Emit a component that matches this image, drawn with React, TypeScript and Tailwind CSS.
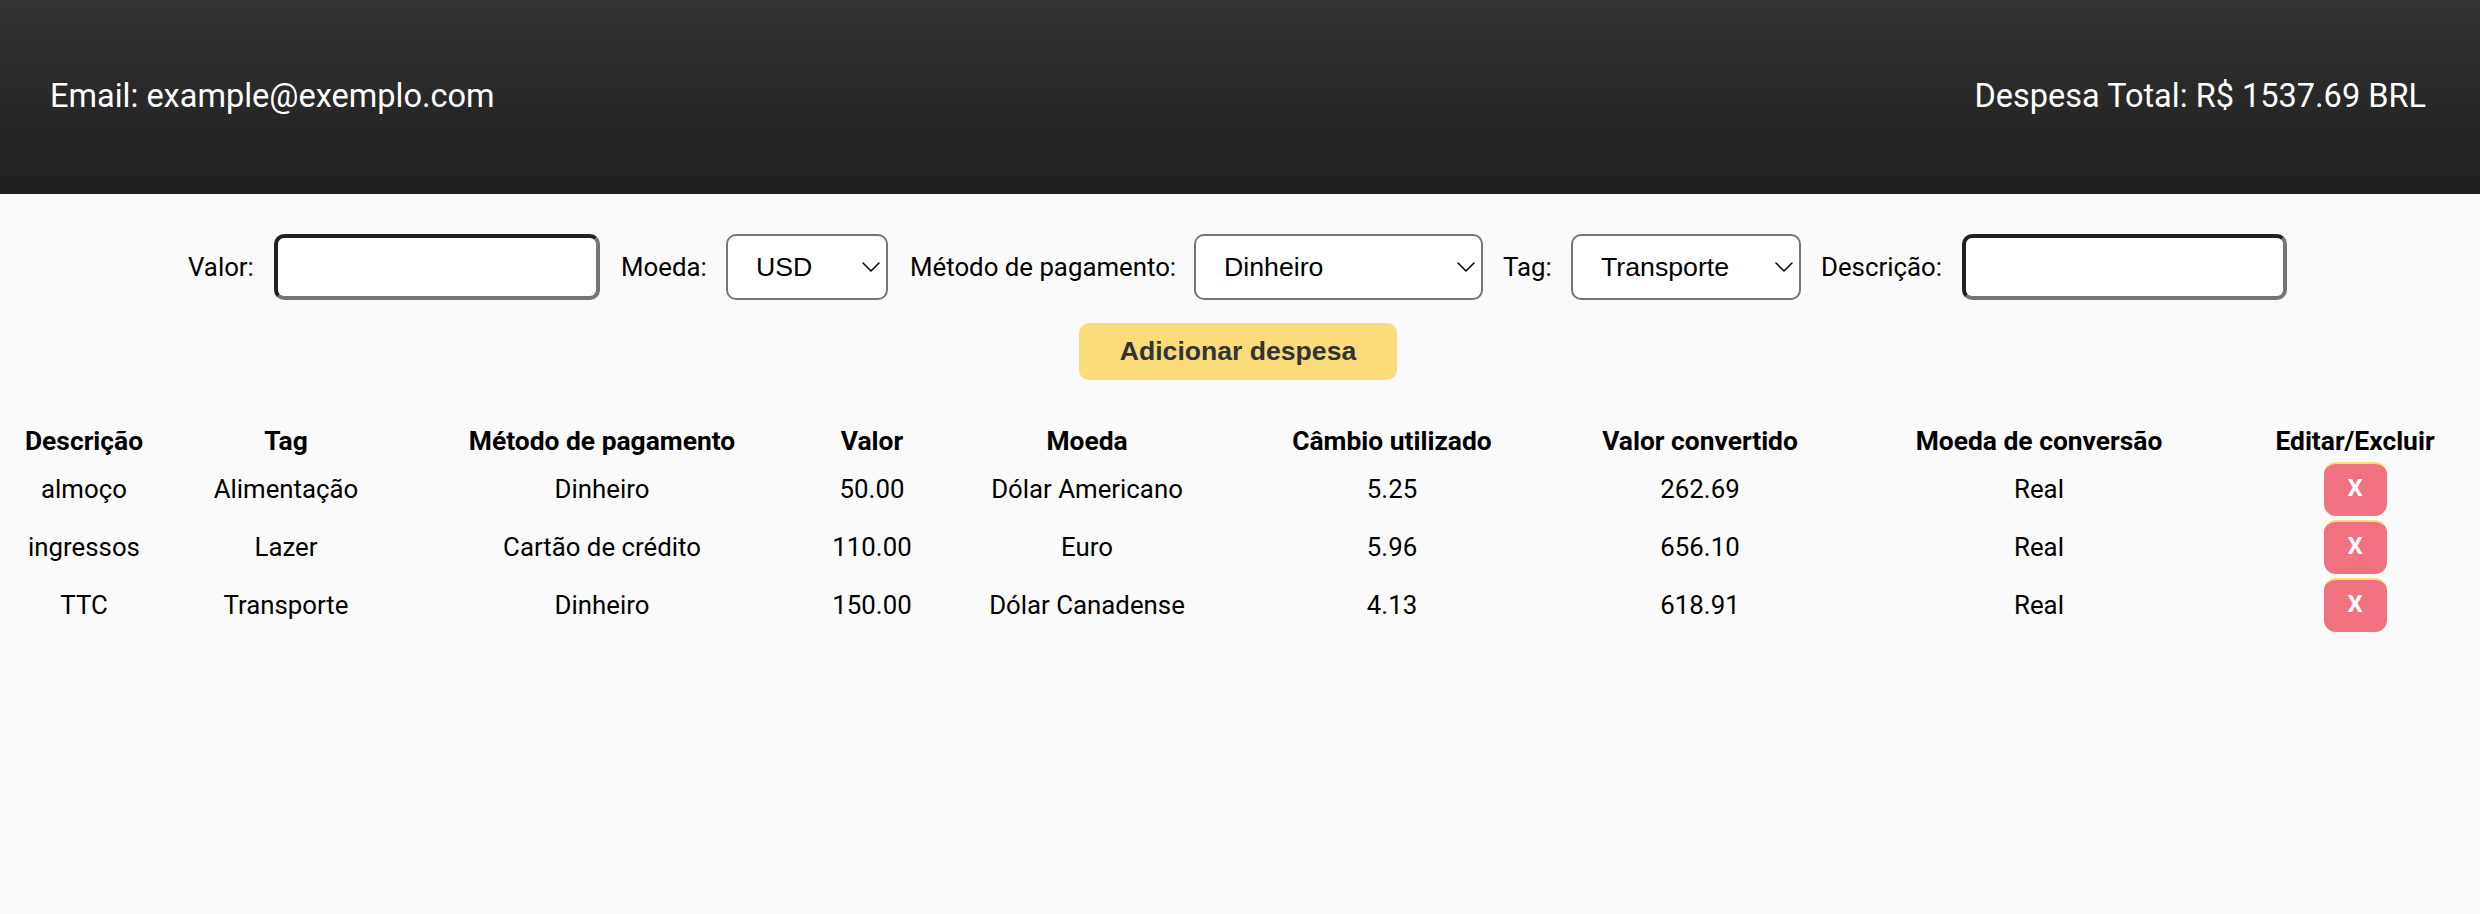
import React from 'react';
import { ChevronDown } from 'lucide-react';

const rows = [
  ['almoço', 'Alimentação', 'Dinheiro', '50.00', 'Dólar Americano', '5.25', '262.69', 'Real'],
  ['ingressos', 'Lazer', 'Cartão de crédito', '110.00', 'Euro', '5.96', '656.10', 'Real'],
  ['TTC', 'Transporte', 'Dinheiro', '150.00', 'Dólar Canadense', '4.13', '618.91', 'Real'],
];

const Select = ({ value, className }: { value: string; className: string }) => (
  <div className={`relative h-[66px] ${className}`}>
    <select
      defaultValue={value}
      className="w-full h-full appearance-none bg-white border-2 border-[#767676] rounded-[10px] pl-[28px] text-[26.7px] text-black font-['Liberation_Sans',sans-serif]"
    >
      <option>{value}</option>
    </select>
    <ChevronDown className="absolute right-[1px] top-[17px] w-[32px] h-[32px] text-black pointer-events-none" strokeWidth={1.1} />
  </div>
);

const inputClass =
  'h-[66px] bg-white rounded-[10px] border-4 border-t-[#222222] border-l-[#222222] border-r-[#767676] border-b-[#767676]';

const App: React.FC = () => {
  return (
    <div className="min-h-[914px] bg-[#fafafa] text-black font-['Roboto',sans-serif] text-[25.8px]">
      <header className="h-[194px] flex items-center justify-between pl-[50px] pr-[54px] pb-[2px] text-[32.5px] text-white bg-gradient-to-b from-[#333333] to-[#1f1f1f]">
        <span>Email: example@exemplo.com</span>
        <span>Despesa Total: R$ 1537.69 BRL</span>
      </header>

      <div className="flex justify-center items-center mt-[40px] pr-[5px]">
        <label className="w-[86px]">Valor:</label>
        <input className={`w-[326px] ${inputClass}`} />
        <label className="w-[105px] ml-[21px]">Moeda:</label>
        <Select value="USD" className="w-[162px]" />
        <label className="w-[284px] ml-[22px]">Método de pagamento:</label>
        <Select value="Dinheiro" className="w-[289px]" />
        <label className="w-[68px] ml-[20px]">Tag:</label>
        <Select value="Transporte" className="w-[230px]" />
        <label className="w-[141px] ml-[20px]">Descrição:</label>
        <input className={`w-[325px] ${inputClass}`} />
      </div>

      <div className="flex justify-center mt-[23px] pr-[4px]">
        <button className="w-[318px] h-[57px] rounded-[10px] bg-[#fadc7a] text-[#333333] font-bold text-[26.6px] font-['Liberation_Sans',sans-serif]">
          Adicionar despesa
        </button>
      </div>

      <table className="table-fixed w-[2478px] mt-[40px] text-center border-collapse">
        <thead>
          <tr className="h-[40px] font-bold text-[26.4px] leading-[36px]">
            <th className="w-[168px] pt-[2px]">Descrição</th>
            <th className="w-[236px] pt-[2px]">Tag</th>
            <th className="w-[396px] pt-[2px]">Método de pagamento</th>
            <th className="w-[144px] pt-[2px]">Valor</th>
            <th className="w-[286px] pt-[2px]">Moeda</th>
            <th className="w-[324px] pt-[2px]">Câmbio utilizado</th>
            <th className="w-[292px] pt-[2px]">Valor convertido</th>
            <th className="w-[386px] pt-[2px]">Moeda de conversão</th>
            <th className="w-[246px] pt-[2px]">Editar/Excluir</th>
          </tr>
        </thead>
        <tbody>
          {rows.map((row) => (
            <tr key={row[0]} className="h-[58px]">
              {row.map((cell, i) => (
                <td key={i}>{cell}</td>
              ))}
              <td>
                <button className="w-[63px] h-[54px] align-middle rounded-[12px] bg-[#f0717f] border-t-2 border-[#fadc7a] pb-[4px] text-white font-bold text-[24px]">
                  X
                </button>
              </td>
            </tr>
          ))}
        </tbody>
      </table>
    </div>
  );
};

export default App;
